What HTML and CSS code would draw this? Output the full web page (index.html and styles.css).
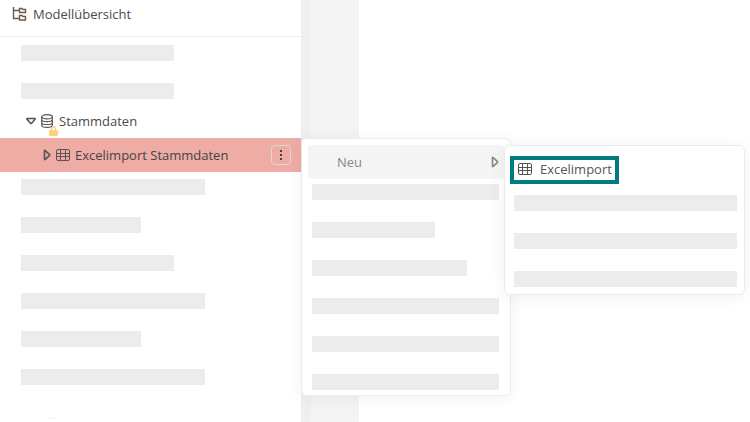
FILE: index.html
```html
<!DOCTYPE html>
<html lang="de">
<head>
    <meta charset="UTF-8">
    <meta name="viewport" content="width=device-width, initial-scale=1.0">
    <title>Modellübersicht</title>
    <link rel="stylesheet" href="styles.css">
</head>
<body>
    <svg class="sprite" aria-hidden="true">
        <symbol id="icon-table" viewBox="0 0 14 12">
            <rect x="0.5" y="0.5" width="13" height="11" rx="1.5" />
            <path d="M0.5 4.5h13M0.5 7.5h13M4.5 0.5v11M9.5 0.5v11" />
        </symbol>
        <symbol id="icon-caret" viewBox="0 0 8 12">
            <path d="M1.5 1.8v8.4q0 .8.7.2l4.1-3.8q.6-.6 0-1.2L2.2 1.6q-.7-.6-.7.2z" />
        </symbol>
    </svg>

    <div class="app">
        <aside class="sidebar">
            <header class="sidebar-header">
                <svg class="icon icon-tree" viewBox="0 0 15 14" aria-hidden="true">
                    <path d="M1.5 0v11.500h5.500M1.5 3.500h5.500" />
                    <path d="M7.500 1.500h2.500l1 1h2.500v3h-6zM7.500 8.500h2.500l1 1h2.500v3.500h-6z" />
                </svg>
                <h1>Modellübersicht</h1>
            </header>

            <div class="bars">
                <div class="bar medium"></div>
                <div class="bar medium"></div>
            </div>

            <div class="row">
                <svg class="icon icon-open" viewBox="0 0 12 8" aria-hidden="true">
                    <path d="M2.2 1.500h7.600q.8 0 .2.700L6.600 6.200q-.6.600-1.200 0L2 2.200q-.6-.7.2-.7z" />
                </svg>
                <span class="database">
                    <svg class="icon icon-database" viewBox="0 0 12 14" aria-hidden="true">
                        <ellipse cx="6" cy="2.800" rx="5.300" ry="2.100" />
                        <path d="M.7 2.800v8.400c0 1.200 2.300 2.100 5.300 2.100s5.300-.9 5.300-2.100V2.800M.7 5.600c0 1.200 2.300 2.100 5.300 2.100s5.300-.9 5.300-2.100M.7 8.400c0 1.200 2.300 2.100 5.300 2.100s5.300-.9 5.300-2.100" />
                    </svg>
                    <svg class="lock" viewBox="0 0 9 10" aria-hidden="true">
                        <path class="shackle" d="M2.5 5V3a2 2 0 0 1 4 0v2" />
                        <rect y="4" width="9" height="6" rx="1" />
                    </svg>
                </span>
                <span class="label">Stammdaten</span>
            </div>

            <div class="row active">
                <svg class="icon icon-caret" aria-hidden="true"><use href="#icon-caret" /></svg>
                <svg class="icon icon-table" aria-hidden="true"><use href="#icon-table" /></svg>
                <span class="label">Excelimport Stammdaten</span>
                <button class="more" type="button" aria-label="Menü">
                    <svg viewBox="0 0 4 12" aria-hidden="true">
                        <path d="M1 1h2v2h-2zM1 5h2v2h-2zM1 9h2v2h-2z" />
                    </svg>
                </button>

                <div class="menu">
                    <button class="menu-item" type="button">
                        <span>Neu</span>
                        <svg class="icon icon-caret" aria-hidden="true"><use href="#icon-caret" /></svg>
                    </button>
                    <div class="bars">
                        <div class="bar"></div>
                        <div class="bar two-thirds"></div>
                        <div class="bar most"></div>
                        <div class="bar"></div>
                        <div class="bar"></div>
                        <div class="bar"></div>
                    </div>

                    <div class="submenu">
                        <button class="highlight" type="button">
                            <svg class="icon icon-table" aria-hidden="true"><use href="#icon-table" /></svg>
                            <span>Excelimport</span>
                        </button>
                        <div class="bars">
                            <div class="bar"></div>
                            <div class="bar"></div>
                            <div class="bar"></div>
                        </div>
                    </div>
                </div>
            </div>

            <div class="bars">
                <div class="bar wide"></div>
                <div class="bar narrow"></div>
                <div class="bar medium"></div>
                <div class="bar wide"></div>
                <div class="bar narrow"></div>
                <div class="bar wide"></div>
            </div>
            <div class="next-row"></div>
        </aside>

        <div class="splitter"></div>
        <div class="toolbar"></div>
        <main class="content"></main>
    </div>
</body>
</html>
```

FILE: styles.css
```css
* {
    box-sizing: border-box;
}
body {
    margin: 0;
    background-color: #fff;
    color: #4a4a4a;
    font-family: "Open Sans", "Noto Sans", sans-serif;
    font-size: 13px;
    line-height: 18px;
}
button {
    font: inherit;
    color: inherit;
    cursor: pointer;
}
.sprite {
    display: none;
}
.icon {
    flex: none;
    fill: none;
    stroke: #555;
    stroke-width: 1.2;
}
.app {
    display: flex;
    min-height: 100vh;
}

/* sidebar */
.sidebar {
    flex: 0 0 301px;
}
.sidebar-header {
    display: flex;
    align-items: center;
    gap: 6px;
    height: 37px;
    padding: 0 12px 8px;
    border-bottom: 1px solid #f0f0f0;
}
.sidebar-header h1 {
    margin: 0;
    font-size: 13px;
    font-weight: normal;
}
.icon-tree {
    width: 15px;
    height: 14px;
    stroke: #6b5a4c;
    stroke-width: 1.4;
}
.bars {
    display: flex;
    flex-direction: column;
    gap: 22px;
    padding: 8px 21px 5px;
}
.bar {
    height: 16px;
    background-color: #ececec;
}
.wide {
    width: 184px;
}
.medium {
    width: 153px;
}
.narrow {
    width: 120px;
}
.row {
    position: relative;
    display: flex;
    align-items: center;
    gap: 5px;
    height: 34px;
    padding: 0 10px 0 25px;
}
.row.active {
    padding-left: 43px;
    background-color: #eeaca4;
    color: #444;
}
.row.active + .bars {
    padding-top: 7px;
}
.label {
    flex: 1;
}
.icon-open {
    width: 12px;
    height: 8px;
    stroke-width: 1.6;
}
.icon-caret {
    width: 8px;
    height: 12px;
    stroke-width: 1.6;
}
.icon-table {
    width: 14px;
    height: 12px;
    stroke-width: 1;
}
.icon-database {
    display: block;
    width: 12px;
    height: 14px;
}
.database {
    position: relative;
    margin: 0 0 0 -1px;
    padding-right: 1px;
}
.lock {
    position: absolute;
    left: 8px;
    top: 12px;
    z-index: 1;
    width: 9px;
    height: 10px;
    fill: #ffd27a;
}
.shackle {
    fill: none;
    stroke: #ffd27a;
    stroke-width: 1.3;
}
.more {
    display: flex;
    align-items: center;
    justify-content: center;
    width: 20px;
    height: 20px;
    padding: 0;
    border: 1px solid #e3d5d3;
    border-radius: 4px;
    background: none;
}
.more svg {
    width: 4px;
    height: 12px;
    fill: #444;
}
.next-row {
    width: 8px;
    height: 1px;
    margin: 28px 0 0 50px;
    background-color: #fdefe3;
}

/* context menu */
.menu,
.submenu {
    position: absolute;
    border: 1px solid #ebebeb;
    border-radius: 6px;
    background-color: #fff;
    box-shadow: 0 2px 16px rgba(0, 0, 0, 0.06);
}
.menu {
    top: 0;
    left: 100%;
    z-index: 2;
    width: 210px;
    padding: 6px 6px 5px;
}
.menu-item {
    display: flex;
    align-items: center;
    justify-content: space-between;
    width: 100%;
    height: 34px;
    padding: 0 5px 0 29px;
    border: 0;
    border-radius: 4px;
    background-color: #f4f4f4;
    color: #868686;
}
.menu-item .icon {
    stroke: #868686;
}
.menu .bars {
    padding: 5px 5px 0 4px;
}
.two-thirds {
    width: 66%;
}
.most {
    width: 83%;
}
.submenu {
    top: 6px;
    left: 202px;
    width: 241px;
    padding: 10px 5px 7px;
}
.highlight {
    display: flex;
    align-items: center;
    gap: 8px;
    height: 28px;
    padding: 0 3px 2px 4px;
    border: 4px solid #007c80;
    background-color: #fff;
    color: #555;
}
.submenu .bars {
    padding: 11px 2px 0 4px;
}

/* main area */
.splitter {
    flex: 0 0 10px;
    background-color: #efefef;
}
.toolbar {
    flex: 0 0 48px;
    background-color: #f4f4f4;
}
.content {
    flex: 1;
}
```
